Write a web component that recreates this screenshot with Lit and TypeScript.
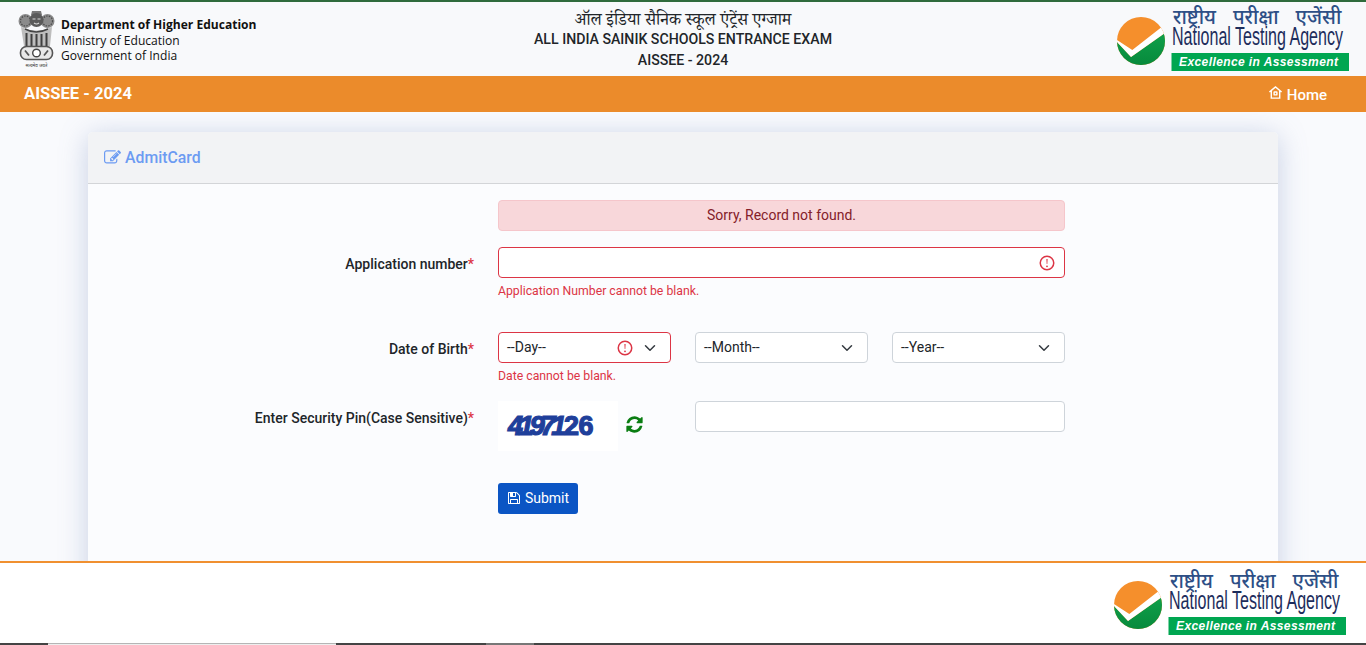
import { LitElement, html, css } from 'lit';
import { customElement } from 'lit/decorators.js';

const alertIcon = html`<svg class="alert-ico" viewBox="0 0 12 12" width="18" height="18" fill="none" stroke="#dc3545"><circle cx="6" cy="6" r="4.5"></circle><path d="M5.6 3.4h.8L6.2 6.700h-.4z" fill="#dc3545" stroke="none"></path><circle cx="6" cy="8.200" r=".6" fill="#dc3545" stroke="none"></circle></svg>`;

const chevron = html`<svg class="chev" viewBox="0 0 16 16" width="16" height="12" fill="none" stroke="#343a40" stroke-width="2" stroke-linecap="round" stroke-linejoin="round"><path d="M2 5l6 6 6-6"></path></svg>`;

function ntaLogo() {
  return html`<svg class="nta" viewBox="0 0 232 64" width="232" height="64">
    <defs>
      <clipPath id="disc"><circle cx="24" cy="32" r="24"></circle></clipPath>
      <linearGradient id="leaf" x1="0" y1="0" x2="0" y2="1">
        <stop offset="0" stop-color="#10a04a"></stop>
        <stop offset="1" stop-color="#078a3c"></stop>
      </linearGradient>
    </defs>
    <g clip-path="url(#disc)">
      <rect x="0" y="8" width="48" height="48" fill="#f58f2c"></rect>
      <path d="M0 33 L14 48 L48 24 L48 56 L0 56 Z" fill="url(#leaf)"></path>
      <path d="M0 31 L15.300 41 L46 17 L48 24 L14 48 L0 33 Z" fill="#fff"></path>
    </g>
    <text x="56" y="15" class="nta-hi">राष्ट्रीय परीक्षा एजेंसी</text>
    <text transform="translate(55 36) scale(.642 1)" class="nta-en">National Testing Agency</text>
    <rect x="54.500" y="44" width="177.500" height="18" fill="#00a651"></rect>
    <text x="62" y="57" class="nta-tag" textLength="159">Excellence in Assessment</text>
  </svg>`;
}

const emblem = html`<svg class="emblem" viewBox="0 0 39 58" width="39" height="58">
  <path d="M15 1h9l1 4h-11z" fill="#777"></path>
  <circle cx="8.500" cy="11" r="7" fill="#8b8b8b"></circle>
  <circle cx="30.500" cy="11" r="7" fill="#8b8b8b"></circle>
  <circle cx="8.500" cy="11" r="5" fill="none" stroke="#4d4d4d" stroke-width="1.200" stroke-dasharray="1.500 1.200"></circle>
  <circle cx="30.500" cy="11" r="5" fill="none" stroke="#4d4d4d" stroke-width="1.200" stroke-dasharray="1.500 1.200"></circle>
  <circle cx="19.500" cy="10" r="7" fill="#5a5a5a"></circle>
  <path d="M15.500 9h3M20.500 9h3M17 13q2.500 2 5 0" stroke="#d8d8d8" stroke-width="1.100" fill="none"></path>
  <path d="M4 17q15 7 31 0l-2 19H7z" fill="#bdbdbd"></path>
  <path d="M8 19q11 6 23 0" fill="none" stroke="#444" stroke-width="1.500"></path>
  <path d="M9.500 23v13M14.500 24v12M19.500 24v12M24.500 24v12M29.500 23v13" stroke="#3f3f3f" stroke-width="2"></path>
  <rect x="3.500" y="36.500" width="32" height="13" rx="6" fill="#e8e8e8" stroke="#555" stroke-width="1.600"></rect>
  <circle cx="19.500" cy="43" r="3.800" fill="#fff" stroke="#444" stroke-width="1.400"></circle>
  <path d="M8 40.500l4 5M31 40.500l-4 5" stroke="#555" stroke-width="1.800"></path>
  <text x="19.500" y="56.500" class="emblem-text" text-anchor="middle">सत्यमेव जयते</text>
</svg>`;

@customElement('app-root')
export class AppRoot extends LitElement {
  static styles = css`
    :host {
      display: block;
      height: 645px;
      overflow: hidden;
      font-family: 'Roboto', 'Liberation Sans', sans-serif;
      background: #f9fafd;
      color: #212529;
    }

    svg {
      overflow: visible;
    }

    .top {
      height: 74px;
      border-top: 2px solid #2f6b3c;
      background: #f8f9fb;
      display: grid;
      grid-template-columns: 1fr auto 1fr;
    }

    .dept {
      display: flex;
      align-items: center;
      gap: 5px;
      padding-left: 17px;
      font-family: 'Open Sans', 'Noto Sans', sans-serif;
      font-size: 12.060px;
      line-height: 15.5px;
      color: #111;
    }

    .dept .lines {
      padding-top: 3px;
    }

    .dept b {
      font-weight: 700;
      display: block;
    }

    .emblem-text {
      font-family: 'Noto Sans Devanagari', 'Noto Sans', sans-serif;
      font-size: 4.500px;
      fill: #333;
    }

    .title {
      padding-top: 15px;
      text-align: center;
      font-size: 14.150px;
      font-weight: 500;
      color: #212529;
      line-height: 21px;
    }

    .title .hi {
      font-family: 'Noto Serif Devanagari', 'Noto Sans Devanagari', 'Lohit Devanagari', 'Noto Sans', serif;
      font-size: 17px;
      font-weight: 400;
      line-height: 12px;
    }

    .top .nta {
      justify-self: end;
      margin: 7px 17px 0 0;
    }

    .nta-hi {
      font-family: 'Noto Sans Devanagari', 'Noto Sans', 'Noto Sans CJK SC', sans-serif;
      font-size: 20px;
      font-weight: 500;
      word-spacing: 11.800px;
      fill: #2d4f86;
    }

    .nta-en {
      font-family: 'Liberation Sans', sans-serif;
      font-size: 25px;
      fill: #1d2d5c;
    }

    .nta-tag {
      font-family: 'Liberation Sans', sans-serif;
      font-style: italic;
      font-weight: 700;
      font-size: 12px;
      fill: #fff;
    }

    .bar {
      height: 36px;
      background: #eb8b2b;
      color: #fff;
      display: flex;
      justify-content: space-between;
      align-items: center;
      padding: 0 39px 0 24px;
      font-weight: 700;
    }

    .bar .brand {
      font-size: 16.600px;
      margin-top: -1px;
    }

    .bar .home {
      font-size: 15px;
      font-weight: 500;
      display: flex;
      align-items: center;
      gap: 4px;
      margin-top: 1px;
    }

    .bar .home svg {
      margin-top: -5px;
    }

    main {
      height: 449px;
      padding: 20px 88px 0;
      box-sizing: border-box;
      overflow: hidden;
      background: #f9fafd;
    }

    .card {
      height: 460px;
      border-radius: 5px 5px 0 0;
      background: #fbfcfe;
      box-shadow: 0 4px 28px rgba(110, 135, 185, 0.36);
    }

    .card-head {
      height: 52px;
      box-sizing: border-box;
      background: #f2f3f5;
      border-bottom: 1px solid #d3d5d8;
      border-radius: 5px 5px 0 0;
      display: flex;
      align-items: center;
      gap: 4px;
      padding: 0 16px;
      color: #6c9bf2;
      font-size: 15.800px;
      font-weight: 500;
    }

    .form {
      display: grid;
      grid-template-columns: 386px 567px;
      padding-top: 16px;
      column-gap: 24px;
    }

    .alert {
      grid-column: 2;
      height: 31px;
      box-sizing: border-box;
      padding-bottom: 2px;
      background: #f8d7da;
      border: 1px solid #f5c6cb;
      border-radius: 4px;
      color: #842029;
      font-size: 14px;
      display: flex;
      align-items: center;
      justify-content: center;
      margin-bottom: 16px;
    }

    .label {
      text-align: right;
      font-size: 14px;
      font-weight: 500;
      color: #212529;
      padding-top: 9px;
    }

    .label i {
      font-style: normal;
      color: #dc3545;
    }

    .field {
      height: 31px;
      box-sizing: border-box;
      border: 1px solid #ced4da;
      border-radius: 4px;
      background: #fff;
      display: flex;
      align-items: center;
      padding: 0 8px;
      font-size: 14px;
      color: #212529;
    }

    .field.bad {
      border-color: #dc3545;
    }

    .err {
      font-size: 12.250px;
      color: #dc3545;
      margin-top: 6px;
      line-height: 14px;
    }

    .app-field {
      height: 85px;
    }

    .app-field .field {
      justify-content: flex-end;
    }

    .dob {
      height: 69px;
    }

    .selects {
      display: grid;
      grid-template-columns: 173px 173px 173px;
      column-gap: 24px;
    }

    .select {
      justify-content: space-between;
      padding-right: 12px;
    }

    .select span {
      flex: 1;
      margin-top: -2px;
    }

    .select .alert-ico {
      margin-right: 8px;
    }

    .pin {
      display: grid;
      grid-template-columns: 173px 370px;
      column-gap: 24px;
      height: 82px;
    }

    .captcha-wrap {
      display: flex;
      align-items: flex-start;
      gap: 7px;
    }

    .captcha {
      width: 120px;
      height: 50px;
      background: #fff;
      display: flex;
      align-items: center;
      padding-left: 10px;
      box-sizing: border-box;
      font-family: 'Liberation Sans', sans-serif;
      font-weight: 700;
      font-style: italic;
      font-size: 27px;
      letter-spacing: -4.200px;
      color: #1f3f9a;
      -webkit-text-stroke: 1.200px #1f3f9a;
    }

    .captcha .up {
      font-style: normal;
      letter-spacing: -0.500px;
      margin-left: 2px;
    }

    .captcha-wrap svg {
      margin-top: 14px;
    }

    .submit {
      grid-column: 2;
      width: 80px;
      height: 31px;
      box-sizing: border-box;
      background: #0b55c4;
      border: none;
      border-radius: 3px;
      color: #fff;
      font-family: inherit;
      font-size: 14px;
      font-weight: 400;
      display: flex;
      align-items: center;
      justify-content: center;
      gap: 4px;
      padding: 0 0 2px;
    }

    footer {
      height: 82px;
      box-sizing: border-box;
      border-top: 2px solid #f09030;
      background: #fff;
      display: flex;
      justify-content: flex-end;
      padding: 10px 20px 0 0;
    }

    .strip {
      height: 2px;
      display: flex;
      background: #444;
    }

    .strip .thumb {
      width: 288px;
      margin-left: 48px;
      box-sizing: border-box;
      background: #eee;
      border-top: 1px solid #b5b5b5;
    }

    .strip .tab {
      width: 48px;
      margin-left: 150px;
      background: #777;
    }
  `;

  render() {
    return html`
      <header class="top">
        <div class="dept">
          ${emblem}
          <div class="lines">
            <b>Department of Higher Education</b>
            Ministry of Education<br />
            Government of India
          </div>
        </div>
        <div class="title">
          <div class="hi">ऑल इंडिया सैनिक स्कूल एंट्रेंस एग्जाम</div>
          <div>ALL INDIA SAINIK SCHOOLS ENTRANCE EXAM</div>
          <div>AISSEE - 2024</div>
        </div>
        ${ntaLogo()}
      </header>
      <nav class="bar">
        <span class="brand">AISSEE - 2024</span>
        <span class="home">
          <svg viewBox="0 0 16 16" width="15" height="15" fill="none" stroke="#fff" stroke-width="1.500">
            <path d="M1.500 7.500L8 2l6.500 5.500M3.500 6.500V14h9V6.500"></path>
            <rect x="6.500" y="7.500" width="3" height="3" rx=".5"></rect>
          </svg>
          Home
        </span>
      </nav>
      <main>
        <section class="card">
          <div class="card-head">
            <svg viewBox="0 0 1792 1792" width="17" height="17" fill="#6c9bf2">
              <path d="M888 1184l116-116-152-152-116 116v56h96v96h56zm440-720q-16-16-33 1l-350 350q-17 17-1 33t33-1l350-350q17-17 1-33zm80 594v190q0 119-84.500 203.500t-203.500 84.500h-832q-119 0-203.500-84.500t-84.500-203.500v-832q0-119 84.500-203.500t203.500-84.500h832q63 0 117 25 15 7 18 23 3 17-9 29l-49 49q-14 14-32 8-23-6-45-6h-832q-66 0-113 47t-47 113v832q0 66 47 113t113 47h832q66 0 113-47t47-113v-126q0-13 9-22l64-64q15-15 35-7t20 29zm-96-738l288 288-672 672h-288v-288zm444 132l-92 92-288-288 92-92q28-28 68-28t68 28l152 152q28 28 28 68t-28 68z"></path>
            </svg>
            AdmitCard
          </div>
          <div class="form">
            <div class="alert">Sorry, Record not found.</div>
            <div class="label">Application number<i>*</i></div>
            <div class="app-field">
              <div class="field bad">${alertIcon}</div>
              <div class="err">Application Number cannot be blank.</div>
            </div>
            <div class="label">Date of Birth<i>*</i></div>
            <div class="dob">
              <div class="selects">
                <div class="field bad select"><span>--Day--</span>${alertIcon}${chevron}</div>
                <div class="field select"><span>--Month--</span>${chevron}</div>
                <div class="field select"><span>--Year--</span>${chevron}</div>
              </div>
              <div class="err">Date cannot be blank.</div>
            </div>
            <div class="label">Enter Security Pin(Case Sensitive)<i>*</i></div>
            <div class="pin">
              <div class="captcha-wrap">
                <div class="captcha"><span>41971</span><span class="up">26</span></div>
                <svg viewBox="0 0 1792 1792" width="19" height="19" fill="#0a7d12">
                  <path d="M1639 1056q0 5-1 7-64 268-268 434.500t-478 166.500q-146 0-282.500-55t-243.500-157l-129 129q-19 19-45 19t-45-19-19-45v-448q0-26 19-45t45-19h448q26 0 45 19t19 45-19 45l-137 137q71 66 161 102t187 36q134 0 250-65t186-179q11-17 53-117 8-23 30-23h192q13 0 22.500 9.500t9.500 22.500zm25-800v448q0 26-19 45t-45 19h-448q-26 0-45-19t-19-45 19-45l138-138q-148-137-349-137-134 0-250 65t-186 179q-11 17-53 117-8 23-30 23h-199q-13 0-22.500-9.500t-9.500-22.500v-7q65-268 270-434.500t480-166.500q146 0 284 55.500t245 156.500l130-129q19-19 45-19t45 19 19 45z"></path>
                </svg>
              </div>
              <div class="field"></div>
            </div>
            <button class="submit">
              <svg viewBox="0 0 1792 1792" width="14" height="14" fill="#fff">
                <path d="M512 1536h768v-384h-768v384zm896 0h128v-896q0-14-10-38.500t-20-34.500l-281-281q-10-10-34-20t-39-10v416q0 40-28 68t-68 28h-576q-40 0-68-28t-28-68v-416h-128v1280h128v-416q0-40 28-68t68-28h832q40 0 68 28t28 68v416zm-384-928v-320q0-13-9.500-22.500t-22.500-9.500h-192q-13 0-22.500 9.500t-9.500 22.500v320q0 13 9.500 22.500t22.500 9.500h192q13 0 22.500-9.500t9.500-22.500zm640 32v928q0 40-28 68t-68 28h-1344q-40 0-68-28t-28-68v-1344q0-40 28-68t68-28h928q40 0 88 20t76 48l280 280q28 28 48 76t20 88z"></path>
              </svg>
              Submit
            </button>
          </div>
        </section>
      </main>
      <footer>${ntaLogo()}</footer>
      <div class="strip"><div class="thumb"></div><div class="tab"></div></div>
    `;
  }
}
